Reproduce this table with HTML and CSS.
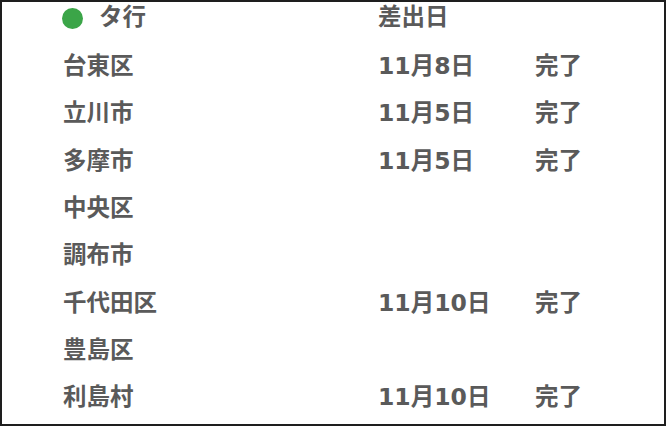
FILE: index.html
```html
<!DOCTYPE html>
<html lang="ja">
<head>
<meta charset="utf-8">
<link rel="stylesheet" href="styles.css">
</head>
<body>
<div class="frame">
  <div class="table">
    <div class="row head">
      <div class="cell name"><span class="dot"></span><span>タ行</span></div>
      <div class="cell date">差出日</div>
      <div class="cell status"></div>
    </div>
    <div class="row">
      <div class="cell name">台東区</div>
      <div class="cell date">11月8日</div>
      <div class="cell status">完了</div>
    </div>
    <div class="row">
      <div class="cell name">立川市</div>
      <div class="cell date">11月5日</div>
      <div class="cell status">完了</div>
    </div>
    <div class="row">
      <div class="cell name">多摩市</div>
      <div class="cell date">11月5日</div>
      <div class="cell status">完了</div>
    </div>
    <div class="row">
      <div class="cell name">中央区</div>
      <div class="cell date"></div>
      <div class="cell status"></div>
    </div>
    <div class="row">
      <div class="cell name">調布市</div>
      <div class="cell date"></div>
      <div class="cell status"></div>
    </div>
    <div class="row">
      <div class="cell name">千代田区</div>
      <div class="cell date">11月10日</div>
      <div class="cell status">完了</div>
    </div>
    <div class="row">
      <div class="cell name">豊島区</div>
      <div class="cell date"></div>
      <div class="cell status"></div>
    </div>
    <div class="row">
      <div class="cell name">利島村</div>
      <div class="cell date">11月10日</div>
      <div class="cell status">完了</div>
    </div>
  </div>
</div>
</body>
</html>
```

FILE: styles.css
```css
html, body {
  margin: 0;
  padding: 0;
  background: #ffffff;
}
.frame {
  box-sizing: border-box;
  width: 666px;
  height: 426px;
  border: 2px solid #1e1e1e;
  overflow: hidden;
  background: #ffffff;
}
.table {
  display: flex;
  flex-direction: column;
  padding-left: 61px;
}
.row {
  display: grid;
  grid-template-columns: 315px 157px 1fr;
  align-items: center;
  height: 47.3px;
  font-family: "DejaVu Sans", "Noto Sans CJK JP", sans-serif;
  font-weight: bold;
  font-size: 23.5px;
  line-height: 1;
  color: #5a5a5a;
}
.row.head {
  height: 32px;
  margin-bottom: 9.3px;
}
.cell {
  white-space: nowrap;
}
.head .name {
  display: flex;
  align-items: center;
  gap: 16px;
  margin-left: -1px;
}
.dot {
  display: block;
  width: 21px;
  height: 21px;
  border-radius: 50%;
  background: #3ba548;
}
```
